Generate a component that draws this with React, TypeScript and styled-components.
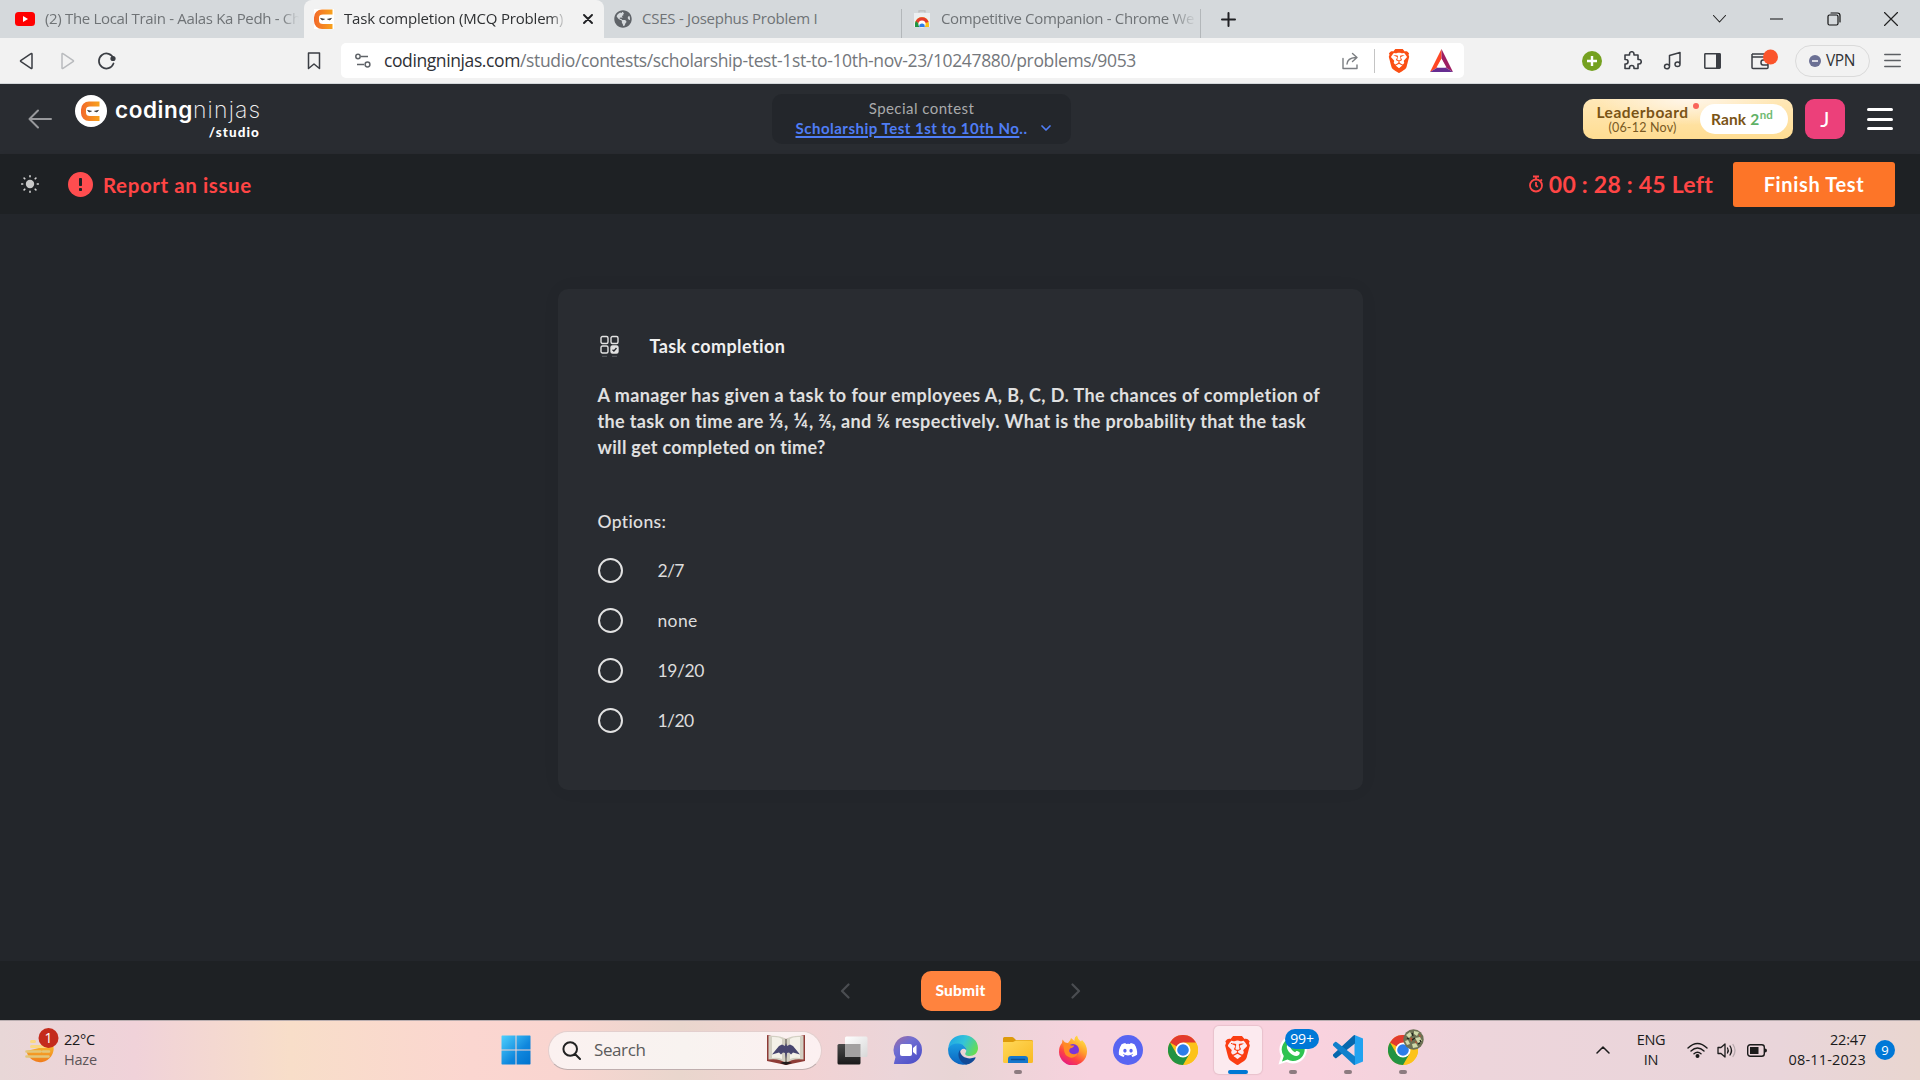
import React from 'react';
import styled, { createGlobalStyle } from 'styled-components';
import { SiBrave } from 'react-icons/si';
import { FaDiscord, FaGlobeAmericas } from 'react-icons/fa';

const UI = '"Open Sans", "Noto Sans", sans-serif';
const PAGE = 'Lato, "Open Sans", sans-serif';
const BRAND = 'Inter, Lato, sans-serif';

const Global = createGlobalStyle`
  * { box-sizing: border-box; }
  html, body { margin: 0; padding: 0; background: #23262b; overflow: hidden; }
  svg { display: block; flex: none; }
`;

const Screen = styled.div`
  width: 1920px;
  height: 1080px;
  display: flex;
  flex-direction: column;
  overflow: hidden;
  font-family: ${PAGE};
`;

/* Single line of text */
const Label = styled.span<{ $size: number; $color: string; $weight?: number; $track?: number; $ui?: boolean; $lh?: number; $lift?: number }>`
  font-family: ${p => (p.$ui ? UI : PAGE)};
  font-size: ${p => p.$size}px;
  line-height: ${p => p.$lh ?? 20}px;
  font-weight: ${p => p.$weight ?? 400};
  letter-spacing: ${p => p.$track ?? 0}px;
  color: ${p => p.$color};
  margin-bottom: ${p => p.$lift ?? 0}px;
  white-space: nowrap;
  flex: none;
`;

const BrandWord = styled(Label)`
  font-family: ${BRAND};
`;

/* Fixed-width cell that centres an icon */
const Cell = styled.div<{ $w: number; $ml?: number }>`
  width: ${p => p.$w}px;
  margin-left: ${p => p.$ml ?? 0}px;
  height: 100%;
  display: flex;
  align-items: center;
  justify-content: center;
  flex: none;
`;

const Spacer = styled.div`
  flex: 1;
`;

/* ---------- Browser chrome ---------- */

const TabStrip = styled.div`
  height: 38px;
  display: flex;
  background: #d5d9dc;
  flex: none;
`;

const Tab = styled.div<{ $w: number; $active?: boolean; $pad: number; $divider?: boolean }>`
  width: ${p => p.$w}px;
  height: 38px;
  display: flex;
  align-items: center;
  gap: 10px;
  padding-left: ${p => p.$pad}px;
  border-radius: 8px 8px 0 0;
  background: ${p => (p.$active ? '#f2f2f2' : 'transparent')};
  flex: none;
  ${p => p.$divider && `
    background: linear-gradient(#b3b7ba, #b3b7ba) right 9px / 1px 29px no-repeat;
    border-radius: 0;
  `}
`;

const TabTitle = styled.div<{ $w: number; $fade?: number }>`
  width: ${p => p.$w}px;
  padding-bottom: 2px;
  display: flex;
  ${p => p.$fade && `mask-image: linear-gradient(90deg, #000 calc(100% - ${p.$fade}px), transparent);`}
`;

const Toolbar = styled.div`
  height: 46px;
  display: flex;
  align-items: center;
  background: #f2f2f2;
  border-bottom: 1px solid #d3d7da;
  flex: none;
`;

const UrlBox = styled.div`
  width: 1123px;
  height: 35px;
  margin-left: 14px;
  display: flex;
  align-items: center;
  background: #fff;
  border-radius: 5px;
  flex: none;
`;

const UrlDivider = styled.div`
  width: 1px;
  height: 24px;
  margin-left: 14px;
  background: #c4c4c4;
`;

const VpnPill = styled.div`
  width: 75px;
  height: 32px;
  margin-left: 12px;
  display: flex;
  align-items: center;
  gap: 5px;
  padding-left: 13px;
  border: 1px solid #dadada;
  border-radius: 16px;
  flex: none;
`;

/* ---------- Site header ---------- */

const Header = styled.header`
  height: 70px;
  display: flex;
  align-items: center;
  background: #292c31;
  flex: none;
`;

const Logo = styled.div`
  width: 186px;
  height: 70px;
  margin-left: 23px;
  display: flex;
  flex: none;
`;

const LogoMark = styled.div`
  width: 32px;
  margin-top: 11px;
`;

const LogoWords = styled.div`
  width: 145px;
  margin-left: 8px;
  margin-top: 12px;
  display: flex;
  flex-direction: column;
  align-items: flex-end;
`;

const LogoLine = styled.div`
  display: flex;
  width: 145px;
  height: 28px;
`;

const ContestPill = styled.div`
  width: 299px;
  height: 50px;
  margin-left: 511px;
  padding-top: 4px;
  background: #23262b;
  border-radius: 10px;
  display: flex;
  flex-direction: column;
  align-items: center;
  flex: none;
`;

const ContestLink = styled.div`
  width: 255px;
  height: 20px;
  margin-left: 3px;
  display: flex;
  align-items: center;
  justify-content: space-between;
`;

const LinkText = styled.span`
  text-decoration: underline;
  text-decoration-thickness: 1.5px;
  text-underline-offset: 2px;
`;

const Leaderboard = styled.div`
  width: 210px;
  height: 40px;
  display: flex;
  align-items: center;
  border-radius: 10px;
  background: radial-gradient(ellipse 90px 26px at 50% 0, #fff6ea, rgba(255, 246, 234, 0)), linear-gradient(#ffe8b8, #ffdd92);
  flex: none;
`;

const BoardText = styled.div`
  width: 91px;
  margin-left: 14px;
  display: flex;
  flex-direction: column;
  align-items: center;
  flex: none;
`;

const RedDot = styled.div`
  width: 6px;
  height: 6px;
  margin: 0 3px 27px 5px;
  border-radius: 50%;
  background: #f9655b;
  flex: none;
`;

const RankPill = styled.div`
  width: 88px;
  height: 30px;
  margin-left: -2px;
  padding-left: 11px;
  display: flex;
  align-items: center;
  gap: 4px;
  background: #fff;
  border-radius: 15px;
  flex: none;
`;

const RankValue = styled.div`
  display: flex;
`;

const Ordinal = styled.span`
  font-size: 11.5px;
  line-height: 12px;
  font-weight: 700;
  color: #6fba70;
`;

const Avatar = styled.div`
  width: 40px;
  height: 40px;
  margin-left: 12px;
  display: flex;
  align-items: center;
  justify-content: center;
  border-radius: 9px;
  background: #ec407a;
  flex: none;
`;

const Burger = styled.div`
  width: 26px;
  height: 22px;
  margin: 0 27px 0 22px;
  display: flex;
  flex-direction: column;
  justify-content: space-between;
  flex: none;
`;

const BurgerLine = styled.div`
  height: 3px;
  border-radius: 2px;
  background: #fff;
`;

/* ---------- Test bar and question ---------- */

const TestBar = styled.div`
  height: 60px;
  display: flex;
  align-items: center;
  background: #1e2124;
  box-shadow: 0 2px 6px rgba(0, 0, 0, 0.12);
  flex: none;
`;

const ReportText = styled.div`
  padding: 1px 0 0 10px;
  display: flex;
`;

const FinishButton = styled.button`
  width: 162px;
  height: 45px;
  margin: 0 25px 0 20px;
  padding: 0;
  border: 0;
  border-radius: 3px;
  background: #fd7528;
  flex: none;
`;

const Workspace = styled.main`
  flex: 1;
  display: flex;
  justify-content: center;
  align-items: flex-start;
  padding-top: 75px;
  background: #23262b;
`;

const Card = styled.section`
  width: 805px;
  height: 501px;
  padding: 41px 40px 0 40px;
  display: flex;
  flex-direction: column;
  background: #292c31;
  border-radius: 10px;
  box-shadow: 0 0 20px rgba(0, 0, 0, 0.04);
`;

const TitleRow = styled.div`
  height: 32px;
  display: flex;
  align-items: center;
  gap: 31px;
  padding-left: 2px;
`;

const Question = styled.div`
  height: 78px;
  margin-top: 20px;
  display: flex;
  flex-direction: column;
`;

/* Full-width fraction glyph inside the question */
const Fraction = styled.span`
  font-size: 20px;
  line-height: 1;
  letter-spacing: 0.8px;
`;

const OptionsTitle = styled.div`
  margin-top: 52px;
  height: 20px;
  display: flex;
  align-items: center;
`;

const OptionList = styled.div`
  margin-top: 13px;
  display: flex;
  flex-direction: column;
`;

const Option = styled.div`
  height: 50px;
  display: flex;
  align-items: center;
  gap: 35px;
`;

const OptionText = styled.div`
  padding-top: 2px;
  display: flex;
`;

const Radio = styled.div`
  width: 25px;
  height: 25px;
  border: 2px solid #e2e2e2;
  border-radius: 50%;
`;

const BottomBar = styled.footer`
  height: 59px;
  display: flex;
  align-items: center;
  justify-content: center;
  background: #1e2124;
  flex: none;
`;

const SubmitButton = styled.button`
  width: 80px;
  height: 40px;
  margin: 0 61px 0 62px;
  padding: 0 0 1px;
  border: 0;
  border-radius: 10px;
  background: #ff833e;
`;

/* ---------- Taskbar ---------- */

const Taskbar = styled.div`
  height: 60px;
  padding-bottom: 1px;
  display: flex;
  align-items: center;
  border-top: 1px solid #b9aeb0;
  background: linear-gradient(90deg, #e8d7d7 0, #f0d2d9 135px, #f8dec9 290px, #fbd6d0 470px, #f9d5d0 560px, #e9d6cd 680px,
    #f2d2d3 800px, #ebd5d9 900px, #e8d5d5 955px, #f7d2de 1090px, #f9d2de 1320px, #edd5db 1480px, #e9d5da 1780px, #e9d6d0 1920px);
  flex: none;
`;

const Weather = styled.div`
  width: 475px;
  margin-left: 25px;
  height: 58px;
  display: flex;
  align-items: center;
  flex: none;
`;

const WeatherArt = styled.div`
  padding-bottom: 6px;
`;

const Stack = styled.div<{ $align: string; $w: number; $ml?: number }>`
  width: ${p => p.$w}px;
  margin-left: ${p => p.$ml ?? 0}px;
  display: flex;
  flex-direction: column;
  align-items: ${p => p.$align};
  flex: none;
`;

const SearchBox = styled.div`
  width: 274px;
  height: 39px;
  margin: 0 3px 0 16px;
  display: flex;
  align-items: center;
  padding: 0 15px 0 13px;
  background: linear-gradient(90deg, #fbf1f0, #f8f3f0 50%, #fcf0f1);
  border: 1px solid #e3cfce;
  border-bottom-color: #bfaeae;
  border-radius: 20px;
  flex: none;
`;

const AppSlot = styled.div<{ $active?: boolean }>`
  width: 55px;
  height: 48px;
  display: flex;
  align-items: center;
  justify-content: center;
  position: relative;
  flex: none;
  ${p => p.$active && `
    width: 48px;
    margin: 0 3.5px;
    background: #fceaef;
    border-radius: 5px;
    box-shadow: 0 0 1px 1px rgba(160, 120, 130, 0.18);
  `}
`;

const RunMark = styled.div<{ $active?: boolean }>`
  position: absolute;
  bottom: 0;
  left: 50%;
  transform: translateX(-50%);
  width: ${p => (p.$active ? 20 : 8)}px;
  height: 4px;
  border-radius: 2px;
  background: ${p => (p.$active ? '#0078d4' : '#8d7b80')};
`;

const CountBadge = styled.div`
  position: absolute;
  left: 20px;
  top: 3px;
  width: 34px;
  height: 20px;
  display: flex;
  align-items: center;
  justify-content: center;
  border-radius: 10px;
  background: #0078d7;
`;

const ProfileBadge = styled.div`
  position: absolute;
  left: 28px;
  top: 3px;
`;

const NoticeBadge = styled.div`
  width: 20px;
  height: 20px;
  margin: 0 25px 0 9px;
  display: flex;
  align-items: center;
  justify-content: center;
  border-radius: 50%;
  background: #0078d7;
  flex: none;
`;

/* ---------- Drawings ---------- */

const NinjaFace = ({ s, round }: { s: number; round?: boolean }) => (
  <svg width={s} height={s} viewBox={round ? '0 0 32 32' : '6 6 20 20'}>
    <defs>
      <linearGradient id="ninja" x1="0" x2="1">
        <stop offset="0" stopColor="#f2682a" />
        <stop offset="1" stopColor="#f8a21c" />
      </linearGradient>
    </defs>
    {round ? <circle cx="16" cy="16" r="16" fill="#fff" /> : <rect x="6" y="6" width="20" height="20" fill="#fff" />}
    <path d="M24.500 6.500H14A8 8 0 0 0 6 14.500V18A8 8 0 0 0 14 26H24.500V21H15Q11 21 11 17.500V14.500Q11 11.500 15 11.500H24.500Z" fill="url(#ninja)" />
    <path d="M12.500 15.300l4 .9-2.500.8zM23.500 15.300l-4 .9 2.500.8z" fill="#333" stroke="#333" strokeWidth=".6" />
  </svg>
);

const ChromeLogo = ({ s }: { s: number }) => (
  <svg width={s} height={s} viewBox="0 0 48 48">
    <circle cx="24" cy="24" r="24" fill="#fbc116" />
    <path d="M24 24L3.200 12A24 24 0 0 1 44.800 12Z" fill="#e33b2e" />
    <path d="M24 12H44.800A24 24 0 0 1 24 48L34.400 30Z" fill="#fcc31a" />
    <path d="M3.200 12A24 24 0 0 0 24 48L34.400 30 24 35 13.600 30Z" fill="#229342" />
    <circle cx="24" cy="24" r="12" fill="#fff" />
    <circle cx="24" cy="24" r="9.300" fill="#2b7de9" />
  </svg>
);

const Stroke = ({ w, h = w, box, d, c = '#3b3e4f', sw = 1.6 }: { w: number; h?: number; box: string; d: string; c?: string; sw?: number }) => (
  <svg width={w} height={h} viewBox={box} fill="none" stroke={c} strokeWidth={sw} strokeLinecap="round" strokeLinejoin="round">
    <path d={d} />
  </svg>
);

const YouTube = () => (
  <svg width="20" height="14" viewBox="0 0 20 14">
    <rect width="20" height="14" rx="3.500" fill="#f00" />
    <path d="M8 4l5 3-5 3z" fill="#fff" />
  </svg>
);

const WebStore = () => (
  <svg width="18" height="18" viewBox="0 0 18 18">
    <path d="M6 2.500V.8h6v1.700" fill="none" stroke="#bbb" strokeWidth="1.200" />
    <path d="M1 3h16v14H1z" fill="#eceff1" />
    <path d="M2 17V14a7 7 0 0 1 14 0v3z" fill="#fbc116" />
    <path d="M2.400 12a7 7 0 0 1 13.200 0L9 14z" fill="#e33b2e" />
    <path d="M2 17V13l1-2 6 6z" fill="#229342" />
    <circle cx="9" cy="14" r="3.600" fill="#fff" />
    <path d="M6.300 17a2.800 2.800 0 1 1 5.400 0z" fill="#2b7de9" />
  </svg>
);

const Bat = () => (
  <svg width="23" height="23" viewBox="0 0 23 23">
    <path d="M11.500 0L0 23l7.500-4.500 4-8.500z" fill="#ff4724" />
    <path d="M11.500 0L23 23l-7.500-4.500-4-8.500z" fill="#9e1f63" />
    <path d="M0 23h23l-7.500-4.500h-8z" fill="#662d91" />
    <path d="M11.500 9.500l5 9h-10z" fill="#fff" />
  </svg>
);

const AddBadge = () => (
  <svg width="20" height="20" viewBox="0 0 20 20">
    <circle cx="10" cy="10" r="10" fill="#75a120" />
    <path d="M10 5v10M5 10h10" stroke="#fff" strokeWidth="2.400" />
  </svg>
);

const SidePanel = () => (
  <svg width="17" height="16" viewBox="0 0 17 16">
    <rect x=".8" y=".8" width="15.400" height="14.400" rx=".6" fill="none" stroke="#3b3e44" strokeWidth="1.500" />
    <path d="M12 1h4.500v14H12z" fill="#3b3e44" />
  </svg>
);

const Wallet = () => (
  <svg width="28" height="24" viewBox="0 0 28 24">
    <g fill="none" stroke="#3b3e44" strokeWidth="1.500">
      <path d="M2 5v13.500q0 1 1 1h14q1 0 1-1V5M2 8h16M2 5h14" />
      <path d="M18 11h-5q-2 0-2 2.500t2 2.500h5" />
    </g>
    <circle cx="20.500" cy="8" r="7.500" fill="#fb542b" />
  </svg>
);

const VpnDot = () => (
  <svg width="12" height="12" viewBox="0 0 12 12">
    <circle cx="6" cy="6" r="6" fill="#6b7094" />
    <path d="M3 6h6" stroke="#fff" strokeWidth="1.500" />
  </svg>
);

const Sun = () => (
  <svg width="20" height="20" viewBox="0 0 20 20" stroke="#d4d4d4" strokeWidth="1.600" strokeLinecap="round">
    <circle cx="10" cy="10" r="4.200" fill="#c9c9c9" stroke="none" />
    <path d="M10 1.700v1M10 17.300v1M1.700 10h1M17.300 10h1M4.100 4.100l.7.7M15.200 15.200l.7.7M4.100 15.900l.7-.7M15.200 4.800l.7-.7" />
  </svg>
);

const Alert = () => (
  <svg width="25" height="25" viewBox="0 0 25 25">
    <circle cx="12.500" cy="12.500" r="12.500" fill="#ff4d4f" />
    <rect x="11" y="6" width="3" height="8" rx=".8" fill="#1e2124" />
    <rect x="11" y="16" width="3" height="3" rx=".8" fill="#1e2124" />
  </svg>
);

const Stopwatch = () => (
  <svg width="16" height="18" viewBox="0 0 16 18" fill="none" stroke="#ff4545" strokeWidth="1.800">
    <circle cx="8" cy="10.500" r="6" />
    <path d="M5 1.500h6M8 2v2M8 7v3.500l1.800 1.500M12.500 4.500l1.500 1.300" />
  </svg>
);

const QuizIcon = () => (
  <svg width="19" height="22" viewBox="0 0 19 22" fill="none" stroke="#e2e2e2" strokeWidth="1.400">
    <rect x="1" y="1.500" width="7" height="7" rx="1.500" />
    <rect x="11" y="1.500" width="7" height="7" rx="1.500" />
    <rect x="1" y="11" width="7" height="7" rx="1.500" />
    <rect x="11" y="11" width="7" height="7" rx="1.500" fill="#e2e2e2" />
    <path d="M12.500 14.700l1.400 1.300 2.600-3" stroke="#292c31" />
    <path d="M2 21.300h5M12 21.300h5" stroke="#5b5e63" strokeWidth="1" />
  </svg>
);

const HazeIcon = () => (
  <svg width="36" height="40" viewBox="0 0 36 40">
    <defs>
      <linearGradient id="haze" x1="0" x2="0" y1="0" y2="1">
        <stop offset="0" stopColor="#f8b52c" />
        <stop offset="1" stopColor="#f07c1c" />
      </linearGradient>
    </defs>
    <path d="M1.500 24L16 20.500 18 19H28.400A13.500 13.500 0 0 1 1.500 24z" fill="url(#haze)" />
    <path d="M1.500 24.500h14M18 24.500h6M1.500 29.500h22" stroke="#e3c67a" strokeWidth="2.600" strokeLinecap="round" />
    <path d="M6.500 14.500h3M6.500 19.500h14" stroke="#fbd982" strokeWidth="3" strokeLinecap="round" />
    <circle cx="23.500" cy="11" r="10" fill="#c42b1c" />
    <text x="23.500" y="16" textAnchor="middle" fontFamily="Open Sans" fontSize="14" fill="#fff">1</text>
  </svg>
);

const WindowsLogo = () => (
  <svg width="30" height="30" viewBox="0 0 30 30">
    <defs>
      <linearGradient id="win" x1="0" y1="0" x2="1" y2="1" >
        <stop offset="0" stopColor="#4fd0fd" />
        <stop offset=".6" stopColor="#0f87dd" />
        <stop offset="1" stopColor="#0072ce" />
      </linearGradient>
    </defs>
    <path d="M1 .5h13.500v14H.5V1zM15.500 .5H29l.5.5v13.500h-14zM.5 15.500h14v14H1l-.5-.5zM15.500 15.500h14V29l-.5.5H15.500z" fill="url(#win)" />
  </svg>
);

const BookArt = () => (
  <svg width="40" height="30" viewBox="0 0 40 30">
    <path d="M1 0L20 4 39 0V26L20 30 1 26Z" fill="#8e3b36" />
    <path d="M2.500 1Q13 0 20 4 27 0 37.500 1V24.500Q27 23 20 28 13 23 2.500 24.500Z" fill="#d3d0c3" />
    <path d="M6 2Q13 1.500 16 4V24Q12 22 6 23ZM34 2Q27 1.500 24 4V24Q28 22 34 23Z" fill="#f4f1e8" />
    <path d="M20 4V28" stroke="#77736a" strokeWidth="1.500" />
    <path d="M20 8l1 3 3-1.500 3 1.500 7 8.500-7-2-2 2-2-2-2 .5L20 24l-1-6-2-.5-2 2-2-2-7 2 7-8.500L16 9.500l3 1.500z" fill="#48466f" />
    <path d="M14 28q6-2.500 12 0l-6 2z" fill="#221b1b" />
  </svg>
);

const TaskView = () => (
  <svg width="31" height="29" viewBox="0 0 31 29">
    <defs>
      <linearGradient id="tv" x1="0" x2="0" y1="0" y2="1">
        <stop offset="0" stopColor="#4a4a4a" />
        <stop offset="1" stopColor="#1a1a1a" />
      </linearGradient>
      <linearGradient id="tvl" x1="0" x2="1" y1="0" y2="1">
        <stop offset="0" stopColor="#fff" />
        <stop offset="1" stopColor="#d8d8d8" />
      </linearGradient>
    </defs>
    <rect x=".5" y="8" width="23" height="20.500" rx="1.500" fill="url(#tv)" />
    <rect x="8" y=".5" width="22.500" height="20.500" rx="1.500" fill="url(#tvl)" />
    <path d="M8 8h15.500v13H9.500L8 20z" fill="#a3a1a1" />
  </svg>
);

const ChatIcon = () => (
  <svg width="30" height="30" viewBox="0 0 30 30">
    <defs>
      <linearGradient id="chat" x1="0" y1="0" x2=".7" y2="1">
        <stop offset="0" stopColor="#a36c9f" />
        <stop offset=".4" stopColor="#6f6ed2" />
        <stop offset="1" stopColor="#4f51c9" />
      </linearGradient>
    </defs>
    <path d="M15 1a14 14 0 0 1 0 28H1.500q-1 0-.5-1L2.500 22A14 14 0 0 1 15 1z" fill="url(#chat)" />
    <rect x="7" y="9" width="12" height="12" rx="2" fill="#fff" />
    <path d="M20 13l3.500-3v10L20 17z" fill="#fff" />
  </svg>
);

const EdgeLogo = () => (
  <svg width="30" height="30" viewBox="0 0 30 30">
    <defs>
      <linearGradient id="edgeTop" x1="0" x2="1" y1=".2" y2=".6">
        <stop offset="0" stopColor="#1fa5e6" />
        <stop offset=".5" stopColor="#34c4d8" />
        <stop offset="1" stopColor="#66dd52" />
      </linearGradient>
      <linearGradient id="edgeLow" x1="0" x2="0" y1="0" y2="1">
        <stop offset="0" stopColor="#1b9de2" />
        <stop offset="1" stopColor="#0b63bf" />
      </linearGradient>
    </defs>
    <path d="M.3 13C1 5 7 0 15 0c9 0 15 6 15 13 0 5-4 8-8.500 8-3.500 0-5-1.500-4-3 2-3 0-8-6-8.500C6 9 2 11 .3 13z" fill="url(#edgeTop)" />
    <path d="M.2 13C2 10 6 8 10.500 8.500 15 9 18.500 12 18.500 15.500c-3-4-8 0-6.500 5 1.200 4.500 6 8 10 7.500A15 15 0 0 1 .2 13z" fill="url(#edgeLow)" />
    <path d="M12 15c-3 3-2 12 6 14.500 4 0 8-3 9.500-6.500.3-.8-.3-.8-1-.4C20 25 12 22 12 15z" fill="#114a97" />
  </svg>
);

const FolderIcon = () => (
  <svg width="30" height="28" viewBox="0 0 30 28">
    <defs>
      <linearGradient id="folder" x1="0" x2="1" y1="0" y2="1">
        <stop offset="0" stopColor="#ffd85a" />
        <stop offset="1" stopColor="#f9ba22" />
      </linearGradient>
    </defs>
    <path d="M0 2.500Q0 1 1.500 1H9q1 0 1.700.7L13 4H28.500Q30 4 30 5.500V10H0z" fill="#dd9a0b" />
    <path d="M0 6h10l3-1.500h15.500Q30 4.500 30 6v19.500Q30 27 28.500 27h-27Q0 27 0 25.500z" fill="url(#folder)" />
    <path d="M5 27v-4q0-3 3-3h14q3 0 3 3v4z" fill="#1577cc" />
    <path d="M8.500 23.500h13" stroke="#0c4f92" strokeWidth="1.500" strokeLinecap="round" />
  </svg>
);

const FirefoxLogo = () => (
  <svg width="30" height="30" viewBox="0 0 30 30">
    <defs>
      <linearGradient id="fox" x1=".85" y1="0" x2=".25" y2="1">
        <stop offset="0" stopColor="#fff04a" />
        <stop offset=".4" stopColor="#ffa02c" />
        <stop offset=".7" stopColor="#ff4442" />
        <stop offset="1" stopColor="#e31587" />
      </linearGradient>
    </defs>
    <path d="M4.500 4.500L7 7.500 10 8Q13 5 13 3l3.500 3Q16 2 19 .5q.5 3.500 4 6L24 5q5 5 5 11A14 14 0 0 1 1 17Q1 11 4 8z" fill="url(#fox)" />
    <circle cx="15" cy="15" r="6" fill="#7a35d8" />
    <path d="M5 8q5-1 8 2.500h3q0 2-4 3-2 3 1 5 4 2 7-1-2 6-8 5-6-2-6-8Z" fill="#ff8a25" />
  </svg>
);

const DiscordIcon = () => (
  <svg width="30" height="30" viewBox="0 0 30 30">
    <circle cx="15" cy="15" r="15" fill="#5865f2" />
    <FaDiscord x={5} y={5} width={20} height={20} size={20} color="#fff" />
  </svg>
);

const WhatsAppIcon = () => (
  <svg width="32" height="32" viewBox="0 0 32 32">
    <path d="M16 1.500a14 14 0 1 1-6.500 26.500L1.500 30.500 4 22A14 14 0 0 1 16 1.500z" fill="#fff" />
    <path d="M16 4a11.500 11.500 0 1 1-5.500 21.500L5 27.500 6.800 22A11.500 11.500 0 0 1 16 4z" fill="#2fc351" />
    <path d="M11.500 9.500c1-.8 2-.3 2.300.6l.8 2c.2.800-.5 1.300-1 2 1 2 2.500 3.300 4.500 4.200.8-.8 1.200-1.600 2-1.200l2.200 1c.8.500.5 2-.5 2.900-2.500 2-6.500.3-9-2.300-2.500-2.500-4.500-6.700-1.300-9.200z" fill="#fff" />
  </svg>
);

const CodeLogo = () => (
  <svg width="30" height="30" viewBox="0 0 30 30">
    <path d="M21.500 0L30 3.500v23L21.500 30z" fill="#22a2f0" />
    <path d="M0 19.500q-.7 1 0 1.600L2 23q.7.500 1.500 0L22 8.500V0q-1 0-1.500.5z" fill="#0767ad" />
    <path d="M0 10.500q-.7-1 0-1.600L2 7q.7-.5 1.500 0L22 21.500V30q-1 0-1.500-.5z" fill="#0f80cc" />
  </svg>
);

const ProfileArt = () => (
  <svg width="21" height="21" viewBox="0 0 21 21">
    <circle cx="10.500" cy="10.500" r="10.200" fill="#6d7154" />
    <path d="M3 6l4-3 2 3-3 3zM11 2l5 1-2 4-3-2zM2 12l3-1 2 4-3 1zM12 9l5-1 2 4-4 2zM9 15l4-1 2 4-5 1z" fill="#cfd8a8" />
    <path d="M7 8l3 2-2 3zM15 5l3 2-1 1zM12 12l2 1-1 2z" fill="#c4502f" />
    <path d="M4 9l2 1M9 4l1 3M15 15l2-1M9 11l3-2M17 11l1 2" stroke="#1f241c" strokeWidth="1.300" />
  </svg>
);

const WifiIcon = () => (
  <svg width="21" height="16" viewBox="0 0 21 16" fill="none" stroke="#1b1b1b" strokeWidth="1.400" strokeLinecap="round">
    <path d="M1 6q9.500-9 19 0M4 9q6.500-6 13 0M7 11.800q3.500-3 7 0" />
    <circle cx="10.500" cy="14" r="1.300" fill="#1b1b1b" />
  </svg>
);

const SpeakerIcon = () => (
  <svg width="20" height="17" viewBox="0 0 20 17" fill="none" stroke="#1b1b1b" strokeWidth="1.300" strokeLinejoin="round" strokeLinecap="round">
    <path d="M1 5.500h3L8 2v13l-4-3.500H1zM10.500 6q1.500 2.500 0 5M13 4q3 4.500 0 9" />
    <path d="M16 2.500q4 6 0 12" stroke="#b7aaae" />
  </svg>
);

const BatteryIcon = () => (
  <svg width="20" height="13" viewBox="0 0 20 13">
    <rect x=".7" y=".7" width="16.600" height="11.600" rx="2.500" fill="none" stroke="#1b1b1b" strokeWidth="1.400" />
    <rect x="3" y="3" width="8.500" height="7" fill="#1b1b1b" />
    <path d="M18 4.500q2 0 2 2t-2 2z" fill="#1b1b1b" />
  </svg>
);

const options = [
  { text: '2/7', track: -0.6 },
  { text: 'none', track: 0.35 },
  { text: '19/20', track: -0.4 },
  { text: '1/20', track: -0.55 },
];

export default function App() {
  return (
    <Screen>
      <Global />

      <TabStrip>
        <Tab $w={304} $pad={15}>
          <YouTube />
          <TabTitle $w={254} $fade={18}><Label $ui $size={15} $color="#6f7376" $track={-0.33}>(2) The Local Train - Aalas Ka Pedh - Ch</Label></TabTitle>
        </Tab>
        <Tab $w={300} $pad={10} $active>
          <NinjaFace s={20} />
          <TabTitle $w={222} $fade={16}><Label $ui $size={15} $color="#2f3133" $track={-0.2}>Task completion (MCQ Problem)</Label></TabTitle>
          <Cell $w={14} $ml={5}><Stroke w={10} box="0 0 10 10" d="M1 1l8 8M9 1L1 9" c="#202124" sw={1.900} /></Cell>
        </Tab>
        <Tab $w={298} $pad={10} $divider>
          <FaGlobeAmericas size={18} color="#5f6368" />
          <TabTitle $w={230}><Label $ui $size={15} $color="#6f7376" $track={-0.25}>CSES - Josephus Problem I</Label></TabTitle>
        </Tab>
        <Tab $w={299} $pad={11} $divider>
          <WebStore />
          <TabTitle $w={256} $fade={26}><Label $ui $size={15} $color="#6f7376" $track={-0.33}>Competitive Companion - Chrome We</Label></TabTitle>
        </Tab>
        <Cell $w={55}><Stroke w={15} box="0 0 15 15" d="M7.500 1v13M1 7.500h13" c="#202124" sw={2} /></Cell>
        <Spacer />
        <Cell $w={57}><Stroke w={13} h={8} box="0 0 13 8" d="M.5 .5l6 6.500 6-6.500" c="#222" sw={1.100} /></Cell>
        <Cell $w={57}><Stroke w={13} h={2} box="0 0 13 2" d="M0 1h13" c="#111" sw={1.200} /></Cell>
        <Cell $w={57}><Stroke w={14} box="0 0 14 14" d="M2.500 3h7q1.500 0 1.500 1.500v7q0 1.500-1.500 1.500h-7Q1 13 1 11.500v-7Q1 3 2.500 3M4 1h6.500Q13 1 13 3.500V10" c="#111" sw={1.200} /></Cell>
        <Cell $w={58}><Stroke w={14} box="0 0 14 14" d="M.5 .5l13 13M13.500 .5l-13 13" c="#222" sw={1.200} /></Cell>
      </TabStrip>

      <Toolbar>
        <Cell $w={40} $ml={7}><Stroke w={16} h={18} box="0 0 16 18" d="M13 2v14q0 1-1 .3L2 9.700q-1-.7 0-1.400L12 1.700q1-.7 1 .3z" c="#3b3e44" sw={1.500} /></Cell>
        <Cell $w={40}><Stroke w={16} h={18} box="0 0 16 18" d="M3 2v14q0 1 1 .3l10-6.600q1-.7 0-1.400L4 1.700Q3 1 3 2z" c="#b9bbbe" sw={1.500} /></Cell>
        <Cell $w={40}>
          <svg width="18" height="18" viewBox="0 0 18 18">
            <path d="M15.500 6.500A7.500 7.500 0 1 0 15.500 11.500" fill="none" stroke="#3b3e44" strokeWidth="1.700" strokeLinecap="round" />
            <circle cx="15" cy="6.500" r="2.600" fill="#3b3e44" />
          </svg>
        </Cell>
        <Cell $w={26} $ml={174}><Stroke w={14} h={18} box="0 0 14 18" d="M1.500 1h11v15.500L7 12l-5.500 4.500z" c="#3b3e44" sw={1.500} /></Cell>
        <UrlBox>
          <Cell $w={43}>
            <svg width="16" height="15" viewBox="0 0 16 15" fill="none" stroke="#5f6368" strokeWidth="1.500">
              <circle cx="3" cy="3.500" r="2.200" /><path d="M6 3.500h7M2 11.500h7" /><circle cx="12.500" cy="11.500" r="2.400" />
            </svg>
          </Cell>
          <Label $ui $size={17.5} $color="#2f3136" $track={-0.4} $lift={2}>codingninjas.com</Label>
          <Label $ui $size={17.5} $color="#74777c" $track={-0.35} $lift={2}>/studio/contests/scholarship-test-1st-to-10th-nov-23/10247880/problems/9053</Label>
          <Spacer />
          <Stroke w={18} h={18} box="0 0 18 18" d="M1 6.500V16.500H15V13M5 12Q5.500 6 13.500 5.500M10.500 1.500l4.500 4-4.500 4" c="#7b7e82" sw={1.400} />
          <UrlDivider />
          <Cell $w={48}><SiBrave size={24} color="#fb4f14" /></Cell>
          <Cell $w={37}><Bat /></Cell>
          <Cell $w={4} />
        </UrlBox>
        <Cell $w={40} $ml={108}><AddBadge /></Cell>
        <Cell $w={40}><Stroke w={19} h={19} box="0 0 19 19" d="M2 4h4.500V3a2 2 0 0 1 4.500 0v1h4v4.500h1a2 2 0 0 1 0 4.500h-1v4.500h-4v-.8a2.200 2.200 0 0 0-4.500 0v.8H2V13h.8a2.200 2.200 0 0 0 0-4.500H2z" c="#3b3e44" /></Cell>
        <Cell $w={40}><Stroke w={19} h={19} box="0 0 19 19" d="M6.500 15.500V4.500L17 1.500V13M6.500 15.500a2.500 2.300 0 1 1-5 0 2.500 2.300 0 0 1 5 0M17 13.200a2.500 2.300 0 1 1-5 0 2.500 2.300 0 0 1 5 0" c="#3b3e44" sw={1.500} /></Cell>
        <Cell $w={40}><SidePanel /></Cell>
        <Cell $w={28} $ml={18}><Wallet /></Cell>
        <Spacer />
        <VpnPill>
          <VpnDot />
          <Label $ui $size={15.5} $color="#303236" $track={-0.4} $lift={2}>VPN</Label>
        </VpnPill>
        <Cell $w={17} $ml={14}><Stroke w={17} h={15} box="0 0 17 15" d="M.8 1.500h15.400M.8 7.500h15.400M.8 13.500h15.400" c="#5c5f63" sw={1.500} /></Cell>
        <Cell $w={19} />
      </Toolbar>

      <Header>
        <Cell $w={24} $ml={28}><Stroke w={24} h={20} box="0 0 24 20" d="M23 10H1.500M10 1.500L1.500 10 10 18.500" c="#98999c" sw={2} /></Cell>
        <Logo>
          <LogoMark><NinjaFace s={32} round /></LogoMark>
          <LogoWords>
            <LogoLine>
              <BrandWord $size={22.5} $color="#fff" $weight={600} $track={0.55} $lh={28}>coding</BrandWord>
              <BrandWord $size={23} $color="#f1f1f1" $weight={200} $track={1.2} $lh={28}>ninjas</BrandWord>
            </LogoLine>
            <Label $size={13.5} $color="#fff" $weight={900} $track={1.1} $lh={16}>/studio</Label>
          </LogoWords>
        </Logo>
        <ContestPill>
          <Label $size={15} $color="#a9aaac" $track={0.45}>Special contest</Label>
          <ContestLink>
            <Label $size={15} $color="#4f7df5" $weight={700} $track={0.5}><LinkText>Scholarship Test 1st to 10th No</LinkText>..</Label>
            <Stroke w={10} h={7} box="0 0 10 7" d="M1 1l4 4 4-4" c="#4f7df5" sw={1.700} />
          </ContestLink>
        </ContestPill>
        <Spacer />
        <Leaderboard>
          <BoardText>
            <Label $size={15.5} $color="#7a5416" $weight={700} $track={0.5} $lh={17}>Leaderboard</Label>
            <Label $size={12.5} $color="#7a5a24" $track={0.2} $lh={13}>(06-12 Nov)</Label>
          </BoardText>
          <RedDot />
          <RankPill>
            <Label $size={15.5} $color="#7a5416" $weight={700} $track={0.1}>Rank</Label>
            <RankValue>
              <Label $size={15.5} $color="#5fb166" $weight={700} $track={0.6}>2</Label>
              <Ordinal>nd</Ordinal>
            </RankValue>
          </RankPill>
        </Leaderboard>
        <Avatar><Label $size={22} $color="#fff">J</Label></Avatar>
        <Burger><BurgerLine /><BurgerLine /><BurgerLine /></Burger>
      </Header>

      <TestBar>
        <Cell $w={20} $ml={20}><Sun /></Cell>
        <Cell $w={25} $ml={28}><Alert /></Cell>
        <ReportText><Label $size={20.5} $color="#ff4545" $weight={700} $track={0.6} $lh={24}>Report an issue</Label></ReportText>
        <Spacer />
        <Stopwatch />
        <Cell $w={5} />
        <Label $size={23} $color="#ff4545" $weight={700} $track={0.24} $lh={28}>00 : 28 : 45 Left</Label>
        <FinishButton><Label $size={20} $color="#fff" $weight={700} $track={0.65}>Finish Test</Label></FinishButton>
      </TestBar>

      <Workspace>
        <Card>
          <TitleRow>
            <QuizIcon />
            <Label $size={18} $color="#f0f0f0" $weight={700} $track={0.4} $lift={1}>Task completion</Label>
          </TitleRow>
          <Question>
            <Label $size={18} $color="#e0e0e0" $weight={700} $track={0.43} $lh={26}>A manager has given a task to four employees A, B, C, D. The chances of completion of</Label>
            <Label $size={18} $color="#e0e0e0" $weight={700} $track={0.36} $lh={26}>the task on time are <Fraction>⅓</Fraction>, <Fraction>¼</Fraction>, ⅖, and ⅚ respectively. What is the probability that the task</Label>
            <Label $size={18} $color="#e0e0e0" $weight={700} $track={0.3} $lh={26}>will get completed on time?</Label>
          </Question>
          <OptionsTitle><Label $size={17.5} $color="#e0e0e0" $weight={500} $track={0.35}>Options:</Label></OptionsTitle>
          <OptionList>
            {options.map(o => (
              <Option key={o.text}>
                <Radio />
                <OptionText><Label $size={17.5} $color="#dcdcdc" $track={o.track}>{o.text}</Label></OptionText>
              </Option>
            ))}
          </OptionList>
        </Card>
      </Workspace>

      <BottomBar>
        <Cell $w={28}><Stroke w={10} h={16} box="0 0 10 16" d="M8.500 1.500L2 8l6.500 6.500" c="#4a4d51" sw={2.200} /></Cell>
        <SubmitButton><Label $size={15.5} $color="#fff" $weight={900} $track={0.15}>Submit</Label></SubmitButton>
        <Cell $w={28}><Stroke w={10} h={16} box="0 0 10 16" d="M1.500 1.500L8 8l-6.500 6.500" c="#4a4d51" sw={2.200} /></Cell>
      </BottomBar>

      <Taskbar>
        <Weather>
          <WeatherArt><HazeIcon /></WeatherArt>
          <Stack $align="flex-start" $w={60} $ml={3}>
            <Label $ui $size={14.5} $color="#1b1b1b" $track={-0.25}>22°C</Label>
            <Label $ui $size={14.5} $color="#5e5558" $track={-0.2}>Haze</Label>
          </Stack>
        </Weather>
        <Cell $w={32}><WindowsLogo /></Cell>
        <SearchBox>
          <Stroke w={19} h={19} box="0 0 19 19" d="M15 8A6.800 6.800 0 1 1 1.400 8 6.800 6.800 0 0 1 15 8M13 13l5 5" c="#222" sw={2} />
          <Cell $w={13} />
          <Label $ui $size={17} $color="#5b5b5b" $track={-0.4}>Search</Label>
          <Spacer />
          <BookArt />
        </SearchBox>
        <AppSlot><TaskView /></AppSlot>
        <AppSlot><ChatIcon /></AppSlot>
        <AppSlot><EdgeLogo /></AppSlot>
        <AppSlot><FolderIcon /><RunMark /></AppSlot>
        <AppSlot><FirefoxLogo /></AppSlot>
        <AppSlot><DiscordIcon /></AppSlot>
        <AppSlot><ChromeLogo s={30} /></AppSlot>
        <AppSlot $active><SiBrave size={29} color="#fb3d12" /><RunMark $active /></AppSlot>
        <AppSlot>
          <WhatsAppIcon />
          <CountBadge><Label $ui $size={14} $color="#fff" $track={-0.2}>99+</Label></CountBadge>
          <RunMark />
        </AppSlot>
        <AppSlot><CodeLogo /><RunMark /></AppSlot>
        <AppSlot>
          <ChromeLogo s={30} />
          <ProfileBadge><ProfileArt /></ProfileBadge>
          <RunMark />
        </AppSlot>
        <Spacer />
        <Stroke w={14} h={8} box="0 0 14 8" d="M1 7l6-6 6 6" c="#1b1b1b" sw={1.500} />
        <Stack $align="center" $w={40} $ml={21}>
          <Label $ui $size={14.5} $color="#1b1b1b" $track={-0.3}>ENG</Label>
          <Label $ui $size={14.5} $color="#1b1b1b" $track={-0.3}>IN</Label>
        </Stack>
        <Cell $w={30} $ml={11}><WifiIcon /></Cell>
        <Cell $w={30}><SpeakerIcon /></Cell>
        <Cell $w={30}><BatteryIcon /></Cell>
        <Stack $align="flex-end" $w={94}>
          <Label $ui $size={14.5} $color="#1b1b1b" $track={-0.2}>22:47</Label>
          <Label $ui $size={14.5} $color="#1b1b1b" $track={0.18}>08-11-2023</Label>
        </Stack>
        <NoticeBadge><Label $ui $size={13} $color="#fff">9</Label></NoticeBadge>
      </Taskbar>
    </Screen>
  );
}
